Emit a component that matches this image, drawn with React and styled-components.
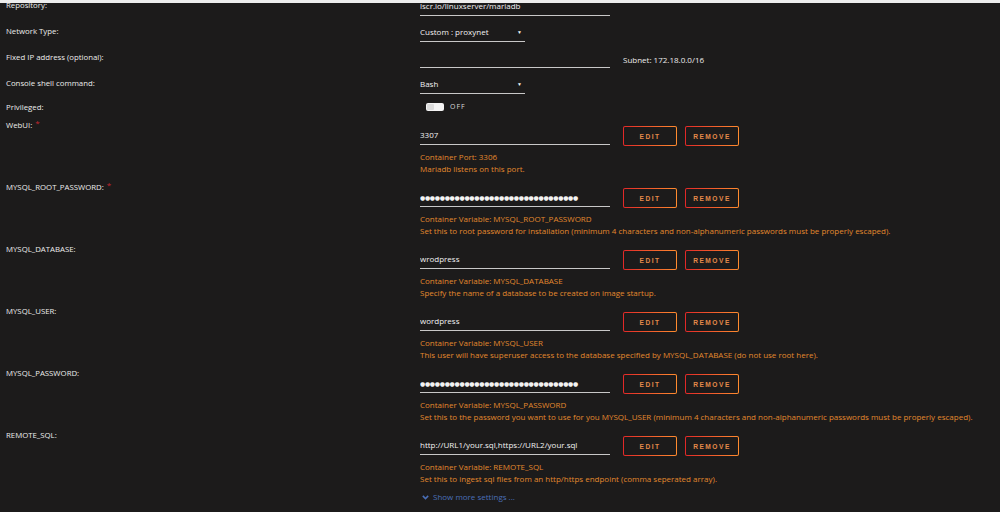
import styled, { createGlobalStyle } from 'styled-components'

const GlobalStyle = createGlobalStyle`
  html, body {
    margin: 0;
    padding: 0;
    background: #1c1b1b;
  }
  body {
    font-family: 'Open Sans', 'Liberation Sans', Arial, sans-serif;
    height: 512px;
    overflow: hidden;
  }
`

const TopBar = styled('div')`
  position: fixed;
  top: 0;
  left: 0;
  right: 0;
  height: 3px;
  background: #ededed;
  z-index: 2;
`

const Page = styled('div')`
  height: 512px;
  overflow: hidden;
  background: #1c1b1b;
  color: #f2f2f2;
`

const Form = styled('div')`
  margin-top: -2px;
  padding-left: 6px;
`

const Row = styled('div')`
  display: grid;
  grid-template-columns: 414px 1fr;
  align-items: start;
  height: ${props => props.h}px;
`

const Label = styled('div')`
  font-size: 7.8px;
  line-height: 12px;
  color: #ececec;
  padding-top: ${props => props.offset || 0}px;
`

const Required = styled('span')`
  color: #c4262e;
  font-size: 8px;
  margin-left: 3px;
  vertical-align: top;
  line-height: 8px;
`

const Value = styled('div')`
  padding-top: ${props => props.offset || 0}px;
`

const Controls = styled('div')`
  display: flex;
  align-items: center;
  gap: 13px;
  height: ${props => props.h || 20}px;
`

const Input = styled('div')`
  width: ${props => props.w || 190}px;
  height: 12px;
  padding: 2px 0 3px;
  line-height: 12px;
  font-size: 8px;
  color: #f2f2f2;
  border-bottom: 1px solid #c8c8c8;
  box-sizing: content-box;
  white-space: nowrap;
  overflow: hidden;
`

const Dots = styled('span')`
  font-family: 'DejaVu Sans', sans-serif;
  font-size: 6px;
  letter-spacing: -0.3px;
  color: #f2f2f2;
`

const Select = styled(Input)`
  display: flex;
  justify-content: space-between;
  align-items: center;
`

const Caret = styled('span')`
  font-size: 5px;
  color: #f2f2f2;
  margin-right: 3px;
`

const Hint = styled('span')`
  font-size: 8px;
  color: #ececec;
`

const Buttons = styled('div')`
  display: flex;
  gap: 8px;
`

const Button = styled('button')`
  width: 54px;
  height: 20px;
  padding: 0;
  border: 1px solid transparent;
  border-radius: 2px;
  background:
    linear-gradient(#1c1b1b, #1c1b1b) padding-box,
    linear-gradient(90deg, #e22828 0%, #ff8c2f 100%) border-box;
  color: #e48a4a;
  font-family: 'Liberation Sans', Arial, sans-serif;
  font-size: 6.6px;
  font-weight: 700;
  letter-spacing: 1.5px;
  text-transform: uppercase;
  cursor: pointer;
`

const Description = styled('div')`
  margin-top: 5px;
  font-size: 8px;
  line-height: 12px;
  color: #e2892e;
  white-space: nowrap;
`

const SwitchRow = styled('div')`
  display: flex;
  align-items: center;
  gap: 6px;
  padding-left: 6px;
  padding-top: 2px;
`

const Switch = styled('div')`
  width: 18px;
  height: 8px;
  border-radius: 2px;
  background: #f4f4f4;
  display: flex;
  align-items: center;
  padding-left: 1px;
  box-sizing: border-box;
`

const Knob = styled('div')`
  width: 7px;
  height: 6px;
  border-radius: 1px;
  background: #dcdcdc;
`

const SwitchText = styled('span')`
  font-size: 7px;
  letter-spacing: 1px;
  color: #d8d8d8;
`

const MoreLink = styled('a')`
  display: flex;
  align-items: center;
  gap: 4px;
  margin-left: 2px;
  font-size: 8px;
  line-height: 12px;
  color: #4a6fb8;
  text-decoration: none;
  cursor: pointer;
`

const dots = '●'.repeat(32)

const envVars = [
  {
    label: 'WebUI:',
    required: true,
    value: '3307',
    lines: ['Container Port: 3306', 'Mariadb listens on this port.']
  },
  {
    label: 'MYSQL_ROOT_PASSWORD:',
    required: true,
    secret: true,
    lines: [
      'Container Variable: MYSQL_ROOT_PASSWORD',
      'Set this to root password for installation (minimum 4 characters and non-alphanumeric passwords must be properly escaped).'
    ]
  },
  {
    label: 'MYSQL_DATABASE:',
    value: 'wrodpress',
    lines: ['Container Variable: MYSQL_DATABASE', 'Specify the name of a database to be created on image startup.']
  },
  {
    label: 'MYSQL_USER:',
    value: 'wordpress',
    lines: [
      'Container Variable: MYSQL_USER',
      'This user will have superuser access to the database specified by MYSQL_DATABASE (do not use root here).'
    ]
  },
  {
    label: 'MYSQL_PASSWORD:',
    secret: true,
    lines: [
      'Container Variable: MYSQL_PASSWORD',
      'Set this to the password you want to use for you MYSQL_USER (minimum 4 characters and non-alphanumeric passwords must be properly escaped).'
    ]
  },
  {
    label: 'REMOTE_SQL:',
    value: 'http://URL1/your.sql,https://URL2/your.sql',
    lines: [
      'Container Variable: REMOTE_SQL',
      'Set this to ingest sql files from an http/https endpoint (comma seperated array).'
    ]
  }
]

const ChevronDown = () => (
  <svg width='7' height='5' viewBox='0 0 7 5'>
    <path d='M0.8 0.9 L3.5 3.6 L6.2 0.9' fill='none' stroke='#4a6fb8' strokeWidth='1.5' />
  </svg>
)

const App = () => {
  return (
    <Page>
      <GlobalStyle />
      <TopBar />
      <Form>
        <Row h={26}>
          <Label offset={1}>Repository:</Label>
          <Value>
            <Input>lscr.io/linuxserver/mariadb</Input>
          </Value>
        </Row>
        <Row h={26}>
          <Label offset={1}>Network Type:</Label>
          <Value>
            <Select w={105}>
              <span>Custom : proxynet</span>
              <Caret>▼</Caret>
            </Select>
          </Value>
        </Row>
        <Row h={26}>
          <Label offset={1}>Fixed IP address (optional):</Label>
          <Value>
            <Controls h={18}>
              <Input />
              <Hint>Subnet: 172.18.0.0/16</Hint>
            </Controls>
          </Value>
        </Row>
        <Row h={24}>
          <Label offset={1}>Console shell command:</Label>
          <Value>
            <Select w={105}>
              <span>Bash</span>
              <Caret>▼</Caret>
            </Select>
          </Value>
        </Row>
        <Row h={19}>
          <Label offset={1}>Privileged:</Label>
          <SwitchRow>
            <Switch><Knob /></Switch>
            <SwitchText>OFF</SwitchText>
          </SwitchRow>
        </Row>
        {envVars.map((item, index) => (
          <Row h={62} key={index}>
            <Label>
              {item.label}
              {item.required && <Required>*</Required>}
            </Label>
            <Value offset={7}>
              <Controls>
                <Input>{item.secret ? <Dots>{dots}</Dots> : item.value}</Input>
                <Buttons>
                  <Button>Edit</Button>
                  <Button>Remove</Button>
                </Buttons>
              </Controls>
              <Description>
                {item.lines.map((line, i) => <div key={i}>{line}</div>)}
              </Description>
            </Value>
          </Row>
        ))}
        <Row h={20}>
          <div />
          <MoreLink>
            <ChevronDown />
            Show more settings ...
          </MoreLink>
        </Row>
      </Form>
    </Page>
  )
}

export default App
